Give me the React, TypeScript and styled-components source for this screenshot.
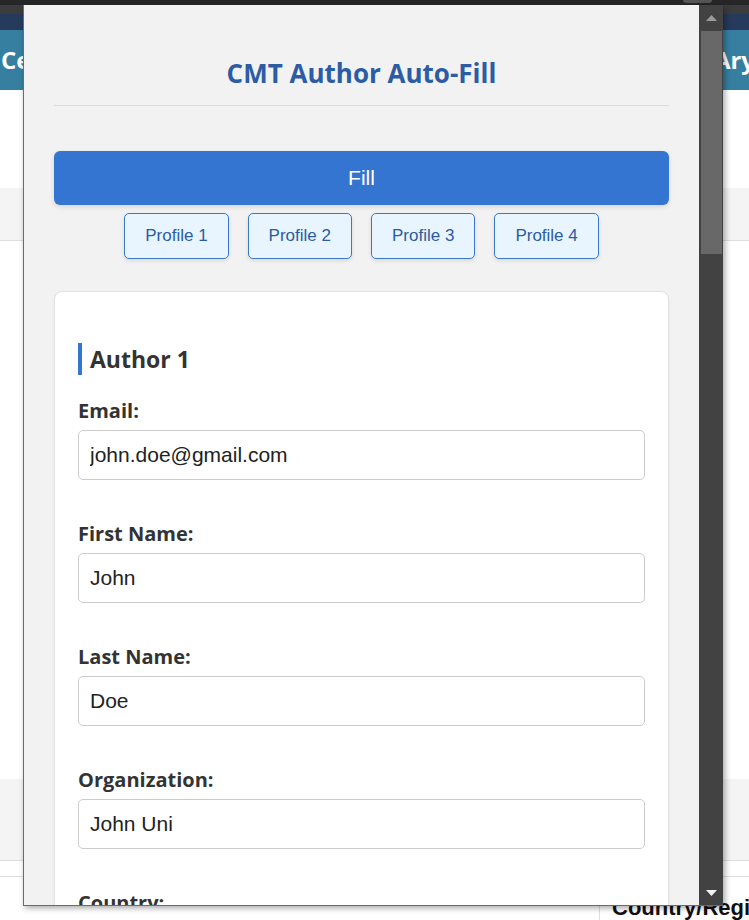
import React from "react";
import styled, { createGlobalStyle } from "styled-components";

const GlobalStyle = createGlobalStyle`
  html, body { margin: 0; padding: 0; }
  body {
    overflow: hidden;
    background: #ffffff;
    font-family: "Open Sans", "Noto Sans", sans-serif;
  }
  * { box-sizing: border-box; }
`;

const Page = styled.div`
  position: relative;
  width: 749px;
  height: 920px;
  overflow: hidden;
  background: #ffffff;
`;

const ChromeStrip = styled.div`
  height: 5px;
  background: #262626;
  display: flex;
`;

const ChromeTab = styled.div`
  margin-left: 683px;
  width: 29px;
  height: 3px;
  background: #555555;
  border-radius: 0 0 10px 10px;
`;

const DarkBar = styled.div`
  height: 9px;
  background: #3c3c3c;
`;

const NavyBar = styled.div`
  height: 16px;
  background: #263a5b;
`;

const TealBar = styled.div`
  height: 60px;
  background: #367fa1;
  display: flex;
  justify-content: space-between;
  align-items: center;
  color: #ffffff;
  font-family: "Open Sans", sans-serif;
  font-weight: 700;
  font-size: 24px;
  line-height: 60px;
  white-space: nowrap;
  overflow: hidden;
`;

const TealText = styled.span<{ $edge: "left" | "right" }>`
  margin-left: ${(p) => (p.$edge === "left" ? "1px" : "0")};
  margin-right: ${(p) => (p.$edge === "right" ? "-6px" : "0")};
`;

const Blank = styled.div<{ $h: number }>`
  height: ${(p) => p.$h}px;
  background: #ffffff;
`;

const GrayBand = styled.div<{ $h: number }>`
  height: ${(p) => p.$h}px;
  background: #f4f4f4;
  border-bottom: 1px solid #dedede;
`;

const TableRow = styled.div`
  display: flex;
  border-top: 1px solid #dedede;
  height: 60px;
  overflow: hidden;
`;

const LeftCell = styled.div`
  width: 600px;
  flex-shrink: 0;
  border-right: 1px solid #dedede;
`;

const RightCell = styled.div`
  flex-shrink: 0;
  padding: 18px 0 0 12px;
  font-family: "Liberation Sans", Arial, sans-serif;
  font-weight: 700;
  font-size: 22px;
  line-height: 26px;
  color: #111111;
  white-space: nowrap;
`;

/* ---------- popup ---------- */

const Popup = styled.div`
  position: absolute;
  left: 23px;
  top: 5px;
  width: 700px;
  height: 901px;
  display: flex;
  border-left: 1px solid #6b6b6b;
  border-bottom: 1px solid #6b6b6b;
  box-shadow: 2px 2px 6px rgba(0, 0, 0, 0.35);
`;

const Panel = styled.div`
  flex: 1;
  height: 100%;
  overflow: hidden;
  background: #f2f2f2;
  padding: 0 30px;
`;

const Header = styled.div`
  padding: 50px 0 14px;
  border-bottom: 1px solid #dcdcdc;
`;

const Title = styled.h1`
  margin: 0;
  text-align: center;
  font-family: "Open Sans", sans-serif;
  font-weight: 700;
  font-size: 26px;
  line-height: 36px;
  color: #2b5ca4;
`;

const FillButton = styled.button`
  display: block;
  width: 100%;
  height: 54px;
  margin-top: 45px;
  border: none;
  border-radius: 6px;
  background: #3375d0;
  color: #ffffff;
  font-family: "Liberation Sans", Arial, sans-serif;
  font-size: 21px;
  box-shadow: 0 2px 5px rgba(0, 0, 0, 0.12);
`;

const ProfileRow = styled.div`
  display: flex;
  justify-content: center;
  gap: 19px;
  margin-top: 8px;
`;

const ProfileButton = styled.button`
  height: 46px;
  padding: 0 20px;
  border: 1px solid #3b78c8;
  border-radius: 5px;
  background: #e8f4fe;
  color: #2b5d9e;
  font-family: "Liberation Sans", Arial, sans-serif;
  font-size: 17px;
  box-shadow: 0 2px 4px rgba(0, 0, 0, 0.1);
`;

const Card = styled.div`
  margin-top: 32px;
  background: #ffffff;
  border: 1px solid #e2e2e2;
  border-radius: 8px;
  padding: 51px 23px 40px;
  box-shadow: 0 1px 3px rgba(0, 0, 0, 0.06);
`;

const AuthorHeading = styled.h2`
  margin: 0 0 22px;
  padding-left: 8px;
  border-left: 4px solid #3375d0;
  font-family: "Open Sans", sans-serif;
  font-weight: 700;
  font-size: 23px;
  line-height: 32px;
  color: #333333;
`;

const Field = styled.div`
  margin-bottom: 40px;
`;

const Label = styled.label`
  display: block;
  margin-bottom: 6px;
  font-family: "Open Sans", sans-serif;
  font-weight: 700;
  font-size: 20px;
  line-height: 27px;
  color: #333333;
`;

const TextInput = styled.input`
  display: block;
  width: 100%;
  height: 50px;
  padding: 0 11px;
  border: 1px solid #cccccc;
  border-radius: 5px;
  background: #ffffff;
  color: #222222;
  font-family: "Liberation Sans", Arial, sans-serif;
  font-size: 21px;
  outline: none;
`;

/* ---------- scrollbar ---------- */

const Scrollbar = styled.div`
  width: 24px;
  flex-shrink: 0;
  background: #424242;
  display: flex;
  flex-direction: column;
`;

const ScrollButton = styled.div<{ $dim?: boolean }>`
  height: 25px;
  flex-shrink: 0;
  display: flex;
  align-items: center;
  justify-content: center;
  padding-left: 1px;
  color: ${(p) => (p.$dim ? "#9a9a9a" : "#f2f2f2")};
`;

const Track = styled.div`
  flex: 1;
  padding-top: 1px;
`;

const Thumb = styled.div`
  margin-left: 2px;
  width: 21px;
  height: 223px;
  background: #686868;
`;

const Arrow: React.FC<{ dir: "up" | "down" }> = ({ dir }) => (
  <svg width="11" height="6" viewBox="0 0 11 6">
    <polygon
      points={dir === "up" ? "0,6 5.5,0 11,6" : "0,0 11,0 5.5,6"}
      fill="currentColor"
    />
  </svg>
);

const fields = [
  { label: "Email:", value: "john.doe@gmail.com" },
  { label: "First Name:", value: "John" },
  { label: "Last Name:", value: "Doe" },
  { label: "Organization:", value: "John Uni" },
  { label: "Country:", value: "" },
];

export default function App() {
  return (
    <>
      <GlobalStyle />
      <Page>
        <ChromeStrip>
          <ChromeTab />
        </ChromeStrip>
        <DarkBar />
        <NavyBar />
        <TealBar>
          <TealText $edge="left">Ce</TealText>
          <TealText $edge="right">Ary</TealText>
        </TealBar>
        <Blank $h={98} />
        <GrayBand $h={53} />
        <Blank $h={538} />
        <GrayBand $h={82} />
        <Blank $h={15} />
        <TableRow>
          <LeftCell />
          <RightCell>Country/Region</RightCell>
        </TableRow>

        <Popup>
          <Panel>
            <Header>
              <Title>CMT Author Auto-Fill</Title>
            </Header>
            <FillButton>Fill</FillButton>
            <ProfileRow>
              {[1, 2, 3, 4].map((n) => (
                <ProfileButton key={n}>Profile {n}</ProfileButton>
              ))}
            </ProfileRow>
            <Card>
              <AuthorHeading>Author 1</AuthorHeading>
              {fields.map((f) => (
                <Field key={f.label}>
                  <Label>{f.label}</Label>
                  <TextInput defaultValue={f.value} readOnly />
                </Field>
              ))}
            </Card>
          </Panel>
          <Scrollbar>
            <ScrollButton $dim>
              <Arrow dir="up" />
            </ScrollButton>
            <Track>
              <Thumb />
            </Track>
            <ScrollButton>
              <Arrow dir="down" />
            </ScrollButton>
          </Scrollbar>
        </Popup>
      </Page>
    </>
  );
}
